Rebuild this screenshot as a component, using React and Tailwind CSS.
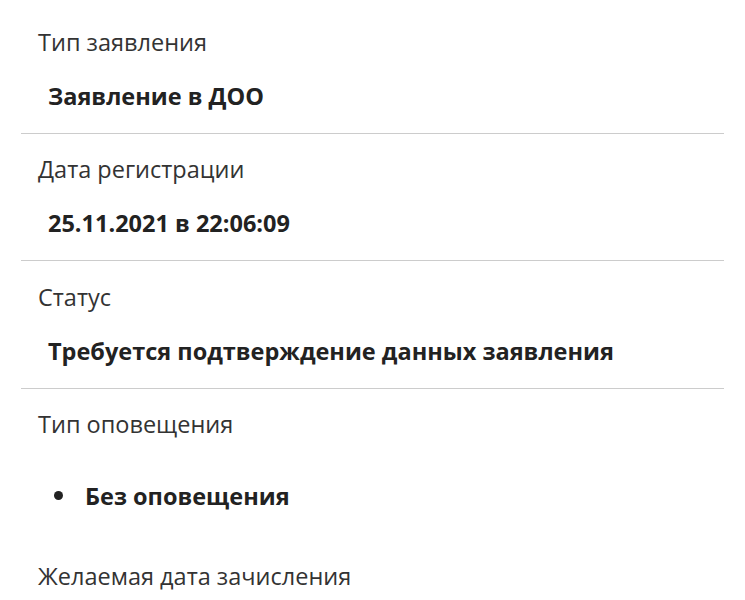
export default function App() {
  const font = { fontFamily: '"Open Sans", "Noto Sans", sans-serif' };
  const Section = ({ label, value }) => (
    <div className="pt-[19.5px] pb-[21px] border-b border-[#cccccc]">
      <div className="pl-[17px] text-[23.5px] leading-[32px] text-[#333333]">{label}</div>
      <div className="pl-[27px] mt-[22px] text-[23.5px] leading-[32px] font-bold text-[#222222]">{value}</div>
    </div>
  );
  return (
    <div className="w-[745px] h-[600px] bg-white overflow-hidden px-[21px] pt-[6px]" style={font}>
      <Section label="Тип заявления" value="Заявление в ДОО" />
      <Section label="Дата регистрации" value="25.11.2021 в 22:06:09" />
      <Section label="Статус" value="Требуется подтверждение данных заявления" />
      <div className="pt-[19px]">
        <div className="pl-[17px] text-[23.5px] leading-[32px] text-[#333333]">Тип оповещения</div>
        <ul className="mt-[40px] pl-[33px] text-[23.5px] leading-[32px] font-bold text-[#222222]">
          <li className="flex items-center">
            <span className="w-[9px] h-[9px] rounded-full bg-[#222222] mr-[22px] shrink-0" />
            <span>Без оповещения</span>
          </li>
        </ul>
        <div className="pl-[17px] mt-[48px] text-[23.5px] leading-[32px] text-[#333333]">Желаемая дата зачисления</div>
      </div>
    </div>
  );
}
